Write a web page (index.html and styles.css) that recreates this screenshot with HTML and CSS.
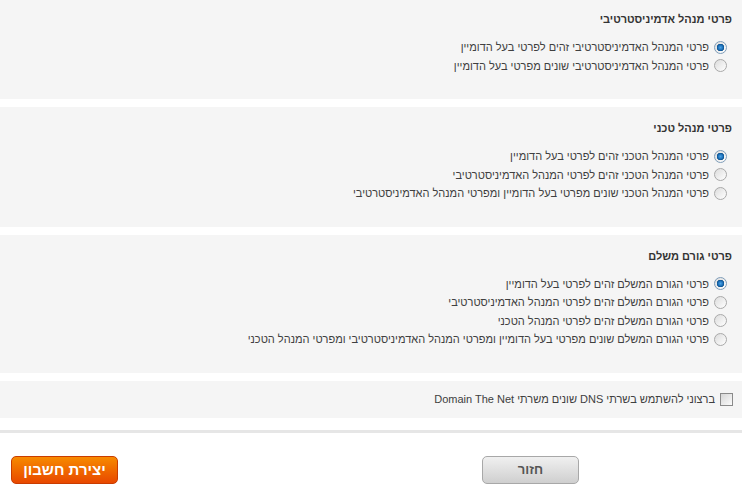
FILE: index.html
```html
<!DOCTYPE html>
<html lang="he" dir="rtl">

<head>
  <meta charset="UTF-8">
  <meta name="viewport" content="width=device-width, initial-scale=1.0">
  <title>פרטי אנשי קשר</title>
  <link rel="stylesheet" href="styles.css">
</head>

<body>
  <div class="panel panel-first">
    <h3 class="panel-title">פרטי מנהל אדמיניסטרטיבי</h3>
    <ul class="options">
      <li><label><input type="radio" name="admin" checked> פרטי המנהל האדמיניסטרטיבי זהים לפרטי בעל הדומיין</label></li>
      <li><label><input type="radio" name="admin"> פרטי המנהל האדמיניסטרטיבי שונים מפרטי בעל הדומיין</label></li>
    </ul>
  </div>

  <div class="panel">
    <h3 class="panel-title">פרטי מנהל טכני</h3>
    <ul class="options">
      <li><label><input type="radio" name="tech" checked> פרטי המנהל הטכני זהים לפרטי בעל הדומיין</label></li>
      <li><label><input type="radio" name="tech"> פרטי המנהל הטכני זהים לפרטי המנהל האדמיניסטרטיבי</label></li>
      <li><label><input type="radio" name="tech"> פרטי המנהל הטכני שונים מפרטי בעל הדומיין ומפרטי המנהל האדמיניסטרטיבי</label></li>
    </ul>
  </div>

  <div class="panel">
    <h3 class="panel-title">פרטי גורם משלם</h3>
    <ul class="options">
      <li><label><input type="radio" name="billing" checked> פרטי הגורם המשלם זהים לפרטי בעל הדומיין</label></li>
      <li><label><input type="radio" name="billing"> פרטי הגורם המשלם זהים לפרטי המנהל האדמיניסטרטיבי</label></li>
      <li><label><input type="radio" name="billing"> פרטי הגורם המשלם זהים לפרטי המנהל הטכני</label></li>
      <li><label><input type="radio" name="billing"> פרטי הגורם המשלם שונים מפרטי בעל הדומיין ומפרטי המנהל האדמיניסטרטיבי ומפרטי המנהל הטכני</label></li>
    </ul>
  </div>

  <div class="panel panel-dns">
    <label><input type="checkbox" name="dns"> ברצוני להשתמש בשרתי DNS שונים משרתי Domain The Net</label>
  </div>

  <div class="actions">
    <button type="button" class="btn btn-back">חזור</button>
    <button type="submit" class="btn btn-create">יצירת חשבון</button>
  </div>
</body>

</html>
```

FILE: styles.css
```css
body {
  margin: 0;
  font-family: "Liberation Sans", Arial, sans-serif;
  font-size: 11px;
  color: #404040;
  background-color: #ffffff;
}

.panel {
  background-color: #f5f5f5;
  padding: 14px 10px 24px 10px;
  margin-bottom: 8px;
}

.panel-first {
  padding-top: 12px;
}

.panel-title {
  margin: 0;
  font-size: 11px;
  line-height: 15px;
  font-weight: bold;
  color: #333333;
}

.options {
  list-style: none;
  margin: 11px 5px 0 0;
  padding: 0;
}

.options li {
  height: 18.5px;
  display: flex;
  align-items: center;
}

label {
  display: flex;
  align-items: center;
  gap: 5px;
}

input[type="radio"] {
  appearance: none;
  margin: 0;
  width: 13px;
  height: 13px;
  border-radius: 50%;
  border: 1px solid #a9a9a9;
  background: linear-gradient(135deg, #dcdcdc, #ffffff);
  box-sizing: border-box;
}

input[type="radio"]:checked {
  background: radial-gradient(circle, #4aa3e6 0, #1c6fb8 2.5px, #0b4f8a 3.5px, transparent 4px), linear-gradient(135deg, #dcdcdc, #ffffff);
  border-color: #7f9db9;
}

.panel-dns {
  padding: 12px 9px 12px 10px;
}

input[type="checkbox"] {
  appearance: none;
  margin: 0;
  width: 13px;
  height: 13px;
  border: 1px solid #8a8a8a;
  background: linear-gradient(135deg, #d6d6d6, #fbfbfb);
  box-sizing: border-box;
}

.actions {
  border-top: 3px solid #e6e6e6;
  margin-top: 12px;
  padding: 23px 163px 0 11px;
  display: flex;
  justify-content: space-between;
}

.btn {
  height: 28px;
  border-radius: 5px;
  font-family: "Liberation Sans", Arial, sans-serif;
  font-weight: bold;
  cursor: pointer;
}

.btn-back {
  width: 97px;
  font-size: 13px;
  color: #555555;
  border: 1px solid #a8a8a8;
  background: linear-gradient(#f0f0f0, #cfcfcf);
}

.btn-create {
  width: 107px;
  font-size: 15px;
  color: #ffffff;
  border: 1px solid #c93c00;
  background: linear-gradient(#f78a00, #e84800);
}
```
